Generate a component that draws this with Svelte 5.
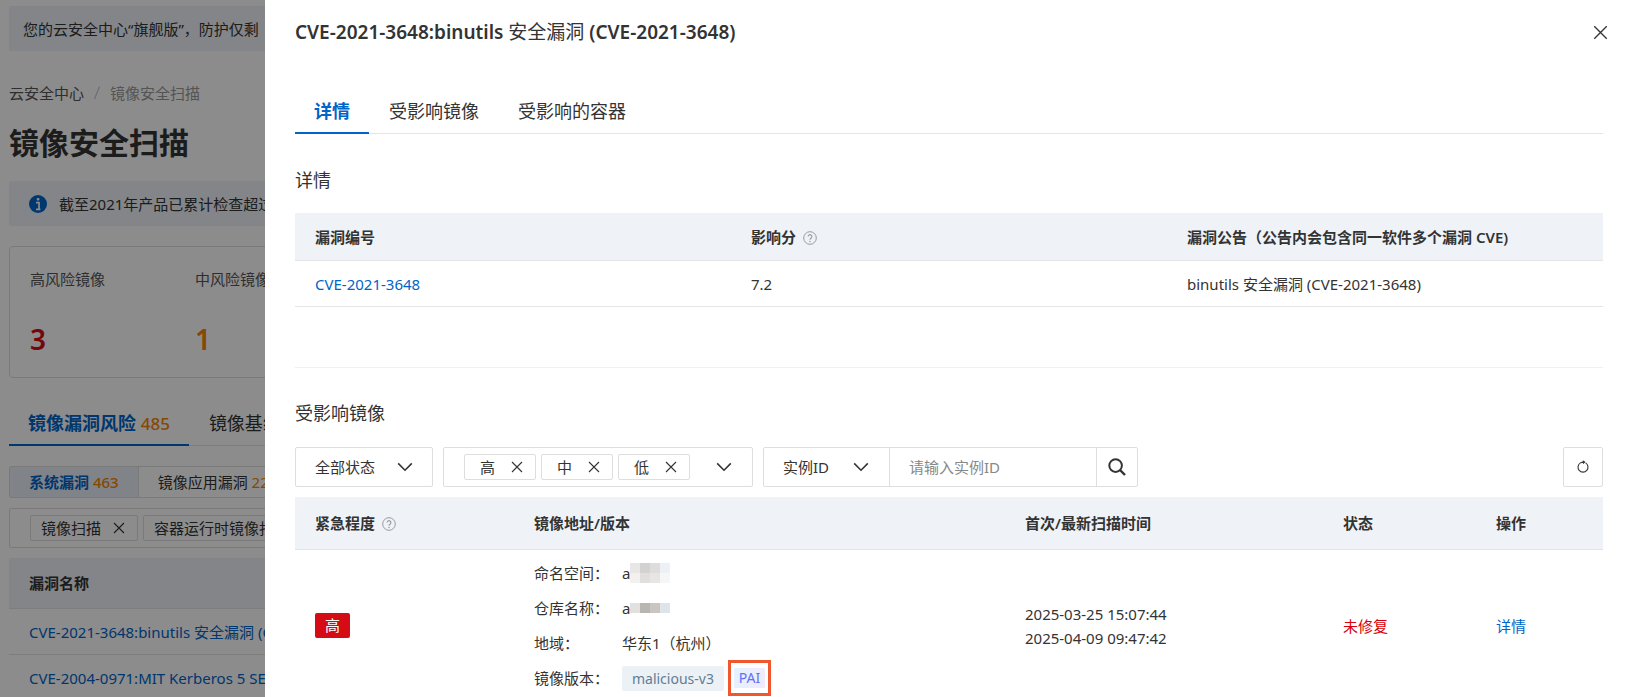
<script>
  const summary = [
    { label: '高风险镜像', value: 3, tone: 'red' },
    { label: '中风险镜像', value: 1, tone: 'orange' }
  ];
  const scanTypes = ['镜像扫描', '容器运行时镜像扫'];
  const vulns = [
    'CVE-2021-3648:binutils 安全漏洞 (CV',
    'CVE-2004-0971:MIT Kerberos 5 SEN'
  ];
  const drawerTabs = ['详情', '受影响镜像', '受影响的容器'];
  const levels = ['高', '中', '低'];
  const namespaceMask = ['#e8e7e5', '#d3d2d0', '#dfdddb', '#edf0f4', '#f2f1f0', '#e0dfde', '#e8e5e3', '#f5f6f7'];
  const repoMask = ['#e3e0de', '#b8b6b3', '#cbc5c1', '#dfe4eb'];
  let active = $state(0);
</script>

{#snippet cross(size)}
  <svg width={size} height={size} viewBox="0 0 12 12" aria-hidden="true">
    <path d="M1 1 11 11M11 1 1 11" fill="none" stroke="currentColor" stroke-width="1.1" />
  </svg>
{/snippet}

{#snippet chevron()}
  <svg class="chevron" width="16" height="10" viewBox="0 0 16 10" aria-hidden="true">
    <path d="M1.2 1.4 8 8.2 14.8 1.4" fill="none" stroke="currentColor" stroke-width="1.6" />
  </svg>
{/snippet}

{#snippet help()}
  <svg class="help" width="14" height="14" viewBox="0 0 14 14" aria-hidden="true">
    <circle cx="7" cy="7" r="6.3" fill="none" stroke="#999" stroke-width="1" />
    <path d="M5.1 5.6a1.9 1.9 0 1 1 2.9 1.6c-.7.4-1 .7-1 1.5" fill="none" stroke="#999" stroke-width="1.1" />
    <circle cx="7" cy="10.4" r=".75" fill="#999" />
  </svg>
{/snippet}

<div class="app">
  <main class="page">
    <div class="notice">您的云安全中心“旗舰版”，防护仅剩</div>
    <nav class="crumbs">
      <a href="#home">云安全中心</a>
      <svg width="26" height="24" viewBox="0 0 26 24" aria-hidden="true">
        <path d="M10.5 18 15.5 5.5" stroke="#c8c8c8" stroke-width="1.2" />
      </svg>
      <span>镜像安全扫描</span>
    </nav>
    <h1>镜像安全扫描</h1>
    <div class="notice info">
      <svg width="18" height="18" viewBox="0 0 18 18" aria-hidden="true">
        <circle cx="9" cy="9" r="9" fill="#0064c8" />
        <path d="M7 7.6h3V14M7 14.4h4.4" fill="none" stroke="#fff" stroke-width="1.7" />
        <rect x="7.8" y="3" width="2.6" height="2.6" rx=".8" fill="#fff" />
      </svg>
      截至2021年产品已累计检查超过
    </div>
    <section class="card">
      {#each summary as item}
        <div>
          <p>{item.label}</p>
          <strong class={item.tone}>{item.value}</strong>
        </div>
      {/each}
    </section>
    <div class="tabs page-tabs">
      <button class="on">镜像漏洞风险 <em>485</em></button>
      <button>镜像基线</button>
    </div>
    <div class="segments">
      <button class="on">系统漏洞 <em>463</em></button>
      <button>镜像应用漏洞 <em>22</em></button>
    </div>
    <div class="box types">
      {#each scanTypes as t}
        <span class="chip">{t}<button aria-label="移除">{@render cross(12)}</button></span>
      {/each}
    </div>
    <table>
      <thead><tr><th>漏洞名称</th></tr></thead>
      <tbody>
        {#each vulns as v}
          <tr><td><a href="#vuln">{v}</a></td></tr>
        {/each}
      </tbody>
    </table>
  </main>

  <div class="mask"></div>

  <aside class="drawer">
    <header>
      <h2>CVE-2021-3648:binutils <span>安全漏洞</span> (CVE-2021-3648)</h2>
      <button class="close" aria-label="关闭">{@render cross(15)}</button>
    </header>

    <div class="tabs">
      {#each drawerTabs as t, i}
        <button class:on={active === i} onclick={() => (active = i)}>{t}</button>
      {/each}
    </div>

    <h3>详情</h3>
    <table class="detail">
      <thead>
        <tr>
          <th>漏洞编号</th>
          <th>影响分{@render help()}</th>
          <th>漏洞公告（公告内会包含同一软件多个漏洞 CVE)</th>
        </tr>
      </thead>
      <tbody>
        <tr>
          <td><a href="#cve">CVE-2021-3648</a></td>
          <td>7.2</td>
          <td>binutils 安全漏洞 (CVE-2021-3648)</td>
        </tr>
      </tbody>
    </table>

    <hr />
    <h3>受影响镜像</h3>

    <div class="filters">
      <div class="box status">
        <select aria-label="状态"><option>全部状态</option></select>
        {@render chevron()}
      </div>
      <div class="box levels">
        {#each levels as l}
          <span class="chip">{l}<button aria-label="移除">{@render cross(12)}</button></span>
        {/each}
        <button class="drop" aria-label="展开">{@render chevron()}</button>
      </div>
      <div class="box search">
        <div class="kind">
          <select aria-label="搜索字段"><option>实例ID</option></select>
          {@render chevron()}
        </div>
        <input type="text" aria-label="实例ID" placeholder="请输入实例ID" />
        <button aria-label="搜索">
          <svg width="20" height="20" viewBox="0 0 20 20" aria-hidden="true">
            <circle cx="8.6" cy="8.6" r="6.3" fill="none" stroke="currentColor" stroke-width="2" />
            <path d="m13 13 5 5" fill="none" stroke="currentColor" stroke-width="2.4" />
          </svg>
        </button>
      </div>
      <button class="box refresh" aria-label="刷新">
        <svg width="14" height="14" viewBox="0 0 14 14" aria-hidden="true">
          <path d="M9.6 2.9A5 5 0 1 1 4.4 2.9Q5.6 2.1 7.8 2.1" fill="none" stroke="currentColor" stroke-width="1.1" />
          <path d="M6.8.2 9.6 2 7 4.2z" fill="currentColor" />
        </svg>
      </button>
    </div>

    <table class="images">
      <colgroup>
        <col style:width="16.74%" /><col style:width="37.54%" /><col style:width="24.31%" />
        <col style:width="11.7%" /><col />
      </colgroup>
      <thead>
        <tr>
          <th>紧急程度{@render help()}</th>
          <th>镜像地址/版本</th>
          <th>首次/最新扫描时间</th>
          <th>状态</th>
          <th>操作</th>
        </tr>
      </thead>
      <tbody>
        <tr>
          <td><span class="severity">高</span></td>
          <td>
            <dl>
              <dt>命名空间：</dt>
              <dd>a<span class="pixels">{#each namespaceMask as c}<i style:background={c}></i>{/each}</span></dd>
              <dt>仓库名称：</dt>
              <dd>a<span class="pixels">{#each repoMask as c}<i style:background={c}></i>{/each}</span></dd>
              <dt>地域：</dt>
              <dd>华东1（杭州）</dd>
              <dt>镜像版本：</dt>
              <dd><span class="version">malicious-v3</span><span class="pai">PAI</span></dd>
            </dl>
          </td>
          <td class="times">2025-03-25 15:07:44<br />2025-04-09 09:47:42</td>
          <td class="unfixed">未修复</td>
          <td><a href="#detail">详情</a></td>
        </tr>
      </tbody>
    </table>
  </aside>
</div>

<style>
  :global(body) {
    overflow: hidden;
  }
  .app {
    position: relative;
    height: 100vh;
    overflow: hidden;
    color: #333;
    background: #fff;
    font: 15px/24px 'Noto Sans', 'Noto Sans CJK SC', sans-serif;
  }
  .app * {
    box-sizing: border-box;
  }
  h1, h2, h3, p, dl, dd {
    margin: 0;
  }
  button, select, input {
    padding: 0;
    border: 0;
    background: none;
    color: inherit;
    font: inherit;
    outline: 0;
  }
  a {
    color: #0064c8;
    text-decoration: none;
  }
  svg {
    display: block;
    flex: none;
  }
  em {
    color: #f68300;
    font-style: normal;
    font-weight: 500;
  }

  /* underlying page */
  .page {
    padding: 6px 0 0 9px;
    white-space: nowrap;
  }
  .notice {
    display: flex;
    align-items: center;
    height: 45px;
    padding-left: 14px;
    background: #eff3f8;
  }
  .info {
    gap: 12px;
    margin-top: 18px;
    padding-left: 20px;
    border-radius: 2px;
  }
  .crumbs {
    display: flex;
    margin-top: 30px;
    color: #999;
  }
  .crumbs a {
    color: #555;
  }
  h1 {
    margin-top: 18px;
    font-size: 30px;
    line-height: 40px;
  }
  .card {
    display: grid;
    grid-template-columns: repeat(auto-fill, 165px);
    height: 132px;
    margin-top: 20px;
    padding: 20px;
    border: 1px solid #dedede;
    border-radius: 4px;
  }
  .card p {
    margin-bottom: 28px;
    color: #555;
  }
  .card strong {
    font-size: 28px;
    line-height: 40px;
    font-weight: 600;
  }
  .red {
    color: #d50b16;
  }
  .orange {
    color: #f68300;
  }
  .tabs {
    display: flex;
    gap: 1px;
    height: 46px;
    margin-top: 41px;
    box-shadow: inset 0 -1px #e3e4e6;
    font-size: 18px;
  }
  .tabs button {
    padding: 0 19px;
  }
  .tabs .on {
    color: #0064c8;
    font-weight: 700;
    box-shadow: inset 0 -2px #0064c8;
  }
  .tabs em {
    font-size: 17px;
  }
  .page-tabs {
    margin-top: 22px;
  }
  .segments {
    display: flex;
    height: 32px;
    margin-top: 20px;
    border: 1px solid #dedede;
    border-radius: 2px;
  }
  .segments button {
    padding: 0 19px;
  }
  .segments .on {
    color: #0064c8;
    font-weight: 700;
    background: #e9eef7;
    border-right: 1px solid #dedede;
  }
  .segments button:not(.on) em {
    font-weight: 400;
  }
  .box {
    display: flex;
    align-items: center;
    height: 40px;
    border: 1px solid #dedede;
    border-radius: 2px;
  }
  .types {
    gap: 5px;
    margin: 10px 0;
    padding-left: 20px;
  }
  .chip {
    display: flex;
    align-items: center;
    gap: 12px;
    height: 26px;
    padding: 0 12px 0 10px;
    border: 1px solid #dedede;
    border-radius: 2px;
  }

  table {
    width: 100%;
    border-collapse: separate;
    border-spacing: 0;
    table-layout: fixed;
  }
  th, td {
    height: 46px;
    padding: 0 0 0 20px;
    border-bottom: 1px solid #e3e4e6;
    text-align: left;
    font-weight: 400;
  }
  .page th {
    height: 51px;
  }
  th {
    background: #eff3f8;
    font-weight: 600;
  }

  .mask {
    position: absolute;
    inset: 0;
    background: rgb(0 0 0 / 45%);
  }

  /* drawer */
  .drawer {
    position: absolute;
    inset: 0 0 0 265px;
    overflow: hidden;
    padding: 17px 22px 0 30px;
    background: #fff;
    white-space: nowrap;
  }
  header {
    display: flex;
    justify-content: space-between;
    align-items: center;
  }
  h2 {
    font-size: 19px;
    line-height: 30px;
    font-weight: 600;
  }
  h2 span {
    font-weight: 400;
  }
  .close {
    margin-right: -5px;
  }
  h3 {
    font-size: 18px;
    font-weight: 400;
  }
  .drawer .tabs + h3 {
    margin: 34px 0 21px;
  }
  .detail th {
    height: 48px;
  }
  .help {
    display: inline-block;
    margin-left: 7px;
    vertical-align: -2px;
  }
  hr {
    height: 1px;
    margin: 60px 0 33px;
    border: 0;
    background: #f0f0f0;
  }
  .filters {
    display: flex;
    gap: 10px;
    margin: 22px 0 10px;
  }
  select {
    appearance: none;
    flex: 1;
    min-width: 0;
    height: 38px;
    padding-left: 19px;
  }
  .chevron {
    pointer-events: none;
  }
  .status {
    width: 138px;
    padding-right: 19px;
  }
  .levels {
    gap: 5px;
    width: 310px;
    padding: 0 20px;
  }
  .levels .chip {
    justify-content: space-between;
    width: 72px;
    padding-left: 15px;
  }
  .drop {
    margin-left: auto;
  }
  .search {
    width: 375px;
  }
  .kind {
    display: flex;
    align-items: center;
    width: 125px;
    padding-right: 20px;
  }
  input {
    flex: 1;
    min-width: 0;
    height: 38px;
    padding-left: 19px;
    border: solid #dedede;
    border-width: 0 1px;
  }
  input::placeholder {
    color: #888;
    opacity: 1;
  }
  .search button {
    display: grid;
    place-items: center;
    width: 40px;
  }
  .refresh {
    justify-content: center;
    width: 40px;
    margin-left: auto;
  }
  .images th {
    height: 53px;
  }
  .images td {
    height: 152px;
  }
  .severity {
    display: block;
    width: 35px;
    border-radius: 2px;
    background: #d50b16;
    color: #fff;
    line-height: 25px;
    text-align: center;
  }
  dl {
    display: grid;
    grid-template-columns: 88px 1fr;
    grid-auto-rows: 35px;
    align-items: center;
  }
  dd {
    display: flex;
    align-items: center;
  }
  .pixels {
    display: grid;
    grid-template-columns: repeat(4, 10px);
    grid-auto-rows: 10px;
  }
  .version {
    padding: 0 10px;
    border-radius: 2px;
    background: #ebf1f5;
    color: #5f7d95;
    font-size: 14px;
    line-height: 25px;
  }
  .pai {
    position: relative;
    width: 31px;
    margin-left: 10px;
    background: linear-gradient(90deg, #e4f2ff, #f0eaff);
    color: #6470f5;
    font-size: 14px;
    line-height: 20px;
    text-align: center;
  }
  .pai::after {
    content: '';
    position: absolute;
    inset: -8px -6px;
    border: 3px solid #f1572f;
  }
  .unfixed {
    color: #d9000b;
  }
</style>
